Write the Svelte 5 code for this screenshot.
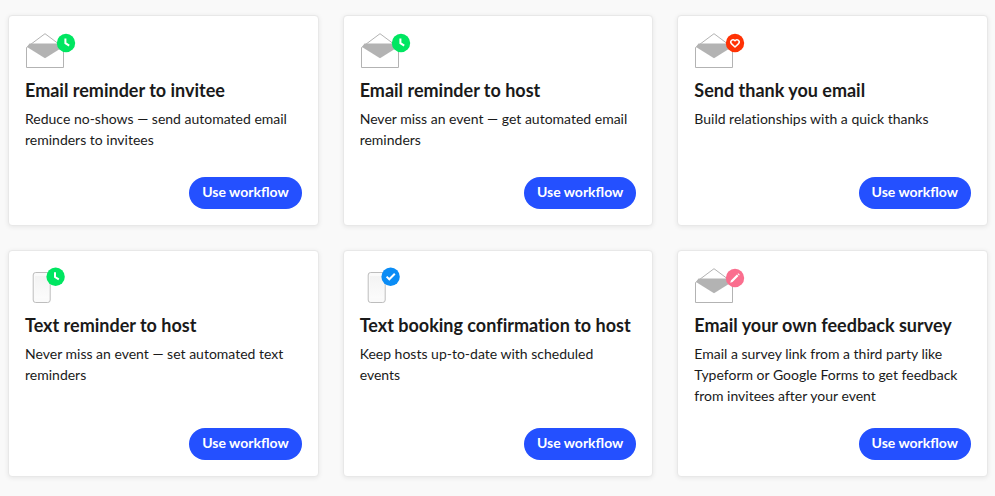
<script lang="ts">
    type Badge = 'clock' | 'heart' | 'check' | 'pencil';

    interface Workflow {
        device: 'email' | 'phone';
        badge: Badge;
        title: string;
        description: string;
    }

    const workflows: Workflow[] = [
        {
            device: 'email',
            badge: 'clock',
            title: 'Email reminder to invitee',
            description: 'Reduce no-shows — send automated email reminders to invitees'
        },
        {
            device: 'email',
            badge: 'clock',
            title: 'Email reminder to host',
            description: 'Never miss an event — get automated email reminders'
        },
        {
            device: 'email',
            badge: 'heart',
            title: 'Send thank you email',
            description: 'Build relationships with a quick thanks'
        },
        {
            device: 'phone',
            badge: 'clock',
            title: 'Text reminder to host',
            description: 'Never miss an event — set automated text reminders'
        },
        {
            device: 'phone',
            badge: 'check',
            title: 'Text booking confirmation to host',
            description: 'Keep hosts up-to-date with scheduled events'
        },
        {
            device: 'email',
            badge: 'pencil',
            title: 'Email your own feedback survey',
            description: 'Email a survey link from a third party like Typeform or Google Forms to get feedback from invitees after your event'
        }
    ];
</script>

<!-- 18px badge drawn around its own centre -->
{#snippet badgeIcon(kind: Badge)}
    <circle r="9.2" class="badge {kind}" />
    {#if kind === 'clock'}
        <path class="mark" d="M-.6 -4.6V.2L3.2 2.6" />
    {:else if kind === 'heart'}
        <path class="mark thin" d="M0 4L-3.6 .6C-5.6 -1.9 -2.1 -4.9 0 -2.2C2.1 -4.9 5.6 -1.9 3.6 .6Z" />
    {:else if kind === 'check'}
        <path class="mark" d="M-4 -.2L-1.3 2.5L4.2 -3" />
    {:else}
        <path class="solid" d="M-4.7 4.7L-4.1 2.5L1.9 -3.5L3.5 -1.9L-2.5 4.1ZM2.5 -4.1L3.2 -4.8L4.8 -3.2L4.1 -2.5Z" />
    {/if}
{/snippet}

<main class="workflows">
    {#each workflows as workflow}
        <article class="card">
            <svg class="icon" width="56" height="38" viewBox="0 0 56 38" aria-hidden="true">
                {#if workflow.device === 'email'}
                    <path class="outline" d="M1.5 15.5L20 1.7L38.5 15.5V35.5H1.5Z" />
                    <path class="flap" d="M4.5 11.5H35.5L38 15L20 26.3L2 15Z" />
                    <g transform="translate(41 11)">{@render badgeIcon(workflow.badge)}</g>
                {:else}
                    <linearGradient id="screen" x2="0" y2="1">
                        <stop offset="0" stop-color="#f3f3f3" />
                        <stop offset="1" stop-color="#fbfbfb" />
                    </linearGradient>
                    <rect class="phone" x="8.2" y="5.5" width="17" height="30" rx="2.5" />
                    <rect x="10" y="9" width="14" height="22" fill="url(#screen)" />
                    <g transform="translate(30.6 9.8)">{@render badgeIcon(workflow.badge)}</g>
                {/if}
            </svg>
            <h2>{workflow.title}</h2>
            <p>{workflow.description}</p>
            <button type="button">Use workflow</button>
        </article>
    {/each}
</main>

<style>
    :global(body) {
        margin: 0;
        background: #f9f9f9;
    }

    .workflows {
        display: grid;
        grid-template-columns: repeat(3, 1fr);
        gap: 24px;
        padding: 15px 7px 15px 8px;
        font-family: Lato, sans-serif;
        font-variant-ligatures: none;
        color: #1a1a1a;
    }

    .card {
        display: flex;
        flex-direction: column;
        box-sizing: border-box;
        min-height: 211px;
        padding: 16px;
        background: #fff;
        border: 1px solid #e8e8e8;
        border-radius: 4px;
        box-shadow: 0 1px 5px rgba(0, 0, 0, 0.08);
    }

    .icon {
        display: block;
    }

    .outline {
        fill: #fff;
        stroke: #b3b3b3;
        stroke-linejoin: round;
    }

    .flap {
        fill: #b3b3b3;
    }

    .phone {
        fill: #fafafa;
        stroke: #bdbdbd;
    }

    .clock {
        fill: #00e661;
    }

    .heart {
        fill: #ff3204;
    }

    .check {
        fill: #0a8cf5;
    }

    .pencil {
        fill: #fa6e8e;
    }

    .mark {
        fill: none;
        stroke: #fff;
        stroke-width: 2;
    }

    .thin {
        stroke-width: 1.5;
        stroke-linejoin: round;
    }

    .solid {
        fill: #fff;
    }

    h2 {
        margin: 8px 0 6px;
        font-size: 18px;
        line-height: 24px;
        font-weight: 700;
    }

    p {
        margin: 0 0 22px;
        font-size: 14px;
        line-height: 21px;
    }

    button {
        align-self: flex-end;
        height: 32px;
        margin-top: auto;
        padding: 0 13px 3px;
        border: none;
        border-radius: 16px;
        background: #2450ff;
        color: #fff;
        font-family: inherit;
        font-size: 14px;
        font-weight: 700;
        cursor: pointer;
    }
</style>
